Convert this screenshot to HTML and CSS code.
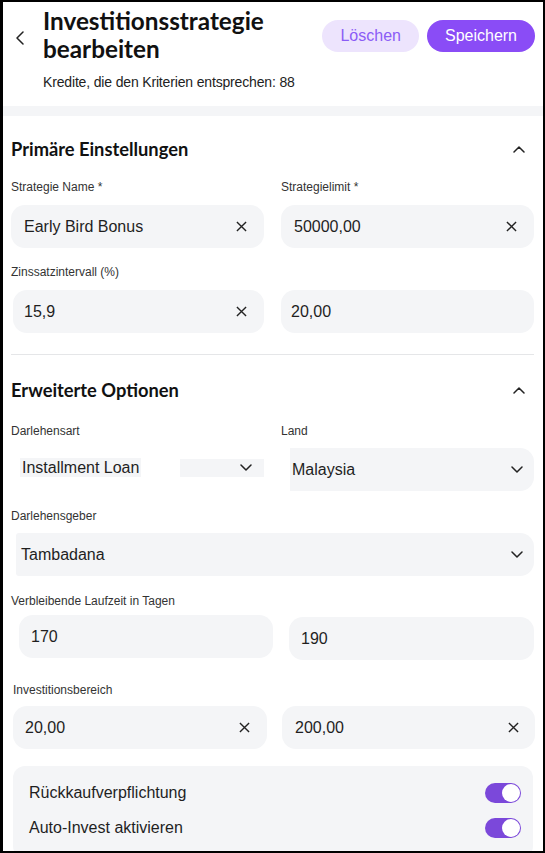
FILE: index.html
```html
<!DOCTYPE html>
<html lang="de">

<head>
    <meta charset="UTF-8">
    <meta name="viewport" content="width=device-width, initial-scale=1.0">
    <title>Investitionsstrategie bearbeiten</title>
    <link rel="stylesheet" href="styles.css">
</head>

<body>
    <div class="screen">
        <!-- Kopfzeile mit Titel und Aktionen -->
        <header class="topbar">
            <button class="back" aria-label="Zurück">
                <svg width="8" height="14" viewBox="0 0 8 14"><path d="M7 1 1 7l6 6" /></svg>
            </button>
            <div class="heading">
                <h1 class="title">Investitionsstrategie<br>bearbeiten</h1>
                <p class="matches">Kredite, die den Kriterien entsprechen: 88</p>
            </div>
            <div class="actions">
                <button class="btn btn-soft">Löschen</button>
                <button class="btn btn-primary">Speichern</button>
            </div>
        </header>
        <div class="band"></div>

        <main class="panel">
            <!-- Primäre Einstellungen -->
            <section class="group">
                <div class="group-head">
                    <h2>Primäre Einstellungen</h2>
                    <svg class="caret-up" width="12" height="7" viewBox="0 0 12 7"><path d="M1 6 6 1l5 5" /></svg>
                </div>
                <div class="pair labels first">
                    <label>Strategie Name *</label>
                    <label>Strategielimit *</label>
                </div>
                <div class="pair inputs near">
                    <div class="input">Early Bird Bonus
                        <svg class="clear" width="11" height="11" viewBox="0 0 12 12"><path d="M1 1l10 10M11 1 1 11" /></svg>
                    </div>
                    <div class="input">50000,00
                        <svg class="clear" width="11" height="11" viewBox="0 0 12 12"><path d="M1 1l10 10M11 1 1 11" /></svg>
                    </div>
                </div>
                <div class="pair labels">
                    <label>Zinssatzintervall (%)</label>
                </div>
                <div class="pair inputs near">
                    <div class="input shift-2">15,9
                        <svg class="clear" width="11" height="11" viewBox="0 0 12 12"><path d="M1 1l10 10M11 1 1 11" /></svg>
                    </div>
                    <div class="input pad-10">20,00</div>
                </div>
            </section>

            <hr class="divider">

            <!-- Erweiterte Optionen -->
            <section class="group">
                <div class="group-head second">
                    <h2>Erweiterte Optionen</h2>
                    <svg class="caret-up" width="12" height="7" viewBox="0 0 12 7"><path d="M1 6 6 1l5 5" /></svg>
                </div>
                <div class="pair labels wide">
                    <label>Darlehensart</label>
                    <label>Land</label>
                </div>
                <div class="pair inputs tight">
                    <div class="select-loose">
                        <span class="value">Installment Loan</span>
                        <span class="caret-box">
                            <svg class="caret-down" width="12" height="7" viewBox="0 0 12 7"><path d="M1 1l5 5 5-5" /></svg>
                        </span>
                    </div>
                    <div class="input select land">Malaysia
                        <svg class="caret-down" width="12" height="7" viewBox="0 0 12 7"><path d="M1 1l5 5 5-5" /></svg>
                    </div>
                </div>
                <label class="single">Darlehensgeber</label>
                <div class="input select lender">Tambadana
                    <svg class="caret-down" width="12" height="7" viewBox="0 0 12 7"><path d="M1 1l5 5 5-5" /></svg>
                </div>
                <label class="single">Verbleibende Laufzeit in Tagen</label>
                <div class="pair inputs days">
                    <div class="input day-min">170</div>
                    <div class="input day-max">190</div>
                </div>
                <label class="single range">Investitionsbereich</label>
                <div class="pair inputs amount">
                    <div class="input amount-min">20,00
                        <svg class="clear" width="11" height="11" viewBox="0 0 12 12"><path d="M1 1l10 10M11 1 1 11" /></svg>
                    </div>
                    <div class="input amount-max">200,00
                        <svg class="clear" width="11" height="11" viewBox="0 0 12 12"><path d="M1 1l10 10M11 1 1 11" /></svg>
                    </div>
                </div>

                <div class="switches">
                    <div class="switch-row">
                        <span>Rückkaufverpflichtung</span>
                        <span class="toggle on"><span class="knob"></span></span>
                    </div>
                    <div class="switch-row">
                        <span>Auto-Invest aktivieren</span>
                        <span class="toggle on"><span class="knob"></span></span>
                    </div>
                </div>
            </section>
        </main>
    </div>
</body>

</html>
```

FILE: styles.css
```css
* {
    padding: 0;
    margin: 0;
    box-sizing: border-box;
}

body {
    background-color: #000;
    font-family: "Liberation Sans", Arial, sans-serif;
    color: #1f1f1f;
}

.screen {
    width: 540px;
    height: 849px;
    margin: 2px 2px 2px 3px;
    background-color: #fff;
    overflow: hidden;
}

/* Kopfzeile */
.topbar {
    display: flex;
    align-items: flex-start;
    height: 104px;
    padding-right: 8px;
}

.back {
    width: 40px;
    padding: 29px 0 0 13px;
    display: flex;
    background: none;
    border: 0;
}

.back path,
.caret-up path,
.caret-down path {
    fill: none;
    stroke: #222;
    stroke-width: 1.5;
    stroke-linecap: round;
    stroke-linejoin: round;
}

.heading {
    flex: 1;
    padding-top: 5px;
}

.title {
    font-family: Lato, sans-serif;
    font-weight: 700;
    font-size: 24.3px;
    line-height: 28px;
    color: #111;
}

.matches {
    margin-top: 10px;
    font-size: 14px;
    line-height: 18px;
    letter-spacing: -0.16px;
    color: #222;
}

.actions {
    display: flex;
    gap: 8px;
    margin-top: 18px;
}

.btn {
    height: 32px;
    padding: 0 18px;
    border: 0;
    border-radius: 16px;
    font-family: "Liberation Sans", Arial, sans-serif;
    font-size: 16px;
}

.btn-soft {
    background-color: #ede4fd;
    color: #8b5cf6;
}

.btn-primary {
    background-color: #8a4cf6;
    color: #fff;
}

.band {
    height: 10px;
    background-color: #f4f5f7;
}

/* Formularbereich */
.panel {
    padding: 21px 9px 0 8px;
}

.group-head {
    display: flex;
    align-items: center;
    justify-content: space-between;
    height: 24px;
}

.group-head.second {
    margin-top: 23px;
}

.group-head h2 {
    font-family: Lato, sans-serif;
    font-weight: 700;
    font-size: 18.3px;
    line-height: 24px;
    color: #111;
}

.caret-up {
    margin-right: 9px;
}

.pair {
    display: grid;
    grid-template-columns: minmax(0, 1fr) minmax(0, 1fr);
    column-gap: 17px;
}

label {
    display: block;
    font-size: 12px;
    line-height: 16px;
    color: #333;
}

.labels {
    margin-top: 16px;
}

.labels.first {
    margin-top: 18px;
}

.labels.wide {
    margin-top: 21px;
}

.inputs.near {
    margin-top: 10px;
}

.inputs.tight {
    margin-top: 9px;
}

.input {
    display: flex;
    align-items: center;
    height: 43px;
    padding: 0 17px 0 13px;
    background-color: #f4f5f7;
    border-radius: 14px;
    font-size: 16px;
    color: #1f1f1f;
}

.clear {
    margin-left: auto;
}

.clear path {
    fill: none;
    stroke: #222;
    stroke-width: 1.5;
}

.caret-down {
    margin-left: auto;
}

.shift-2 {
    margin-left: 2px;
    padding-left: 11px;
}

.pad-10 {
    padding-left: 10px;
}

.divider {
    margin-top: 21px;
    border: 0;
    border-top: 1px solid #e5e6e8;
}

/* Darlehensart: Wert und Pfeil getrennt gezeichnet */
.select-loose {
    display: flex;
    align-items: center;
    height: 43px;
    padding-left: 9px;
    margin-top: -2px;
}

.select-loose .value {
    padding: 0 2px;
    line-height: 19px;
    font-size: 16px;
    background-color: #f4f5f7;
}

.caret-box {
    display: flex;
    align-items: center;
    width: 84px;
    height: 18px;
    margin-left: auto;
    padding-right: 12px;
    background-color: #f4f5f7;
}

.land {
    margin-left: 9px;
    padding: 0 11px 0 2px;
    border-radius: 0 14px 14px 0;
}

.single {
    margin-top: 17px;
}

.single.range {
    margin-top: 22px;
    margin-left: 2px;
}

.lender {
    margin-top: 9px;
    margin-left: 5px;
    padding: 0 11px 0 5px;
    border-radius: 3px 14px 14px 3px;
}

.days {
    margin-top: 6px;
}

.day-min {
    width: 254px;
    margin-left: 8px;
    padding-left: 12px;
}

.day-max {
    margin: 2px 0 0 8px;
    padding-left: 12px;
}

.amount {
    margin-top: 8px;
}

.amount-min {
    width: 254px;
    margin-left: 2px;
    padding-left: 12px;
}

.amount-max {
    margin: 0 -1px 0 1px;
    padding-left: 13px;
    padding-right: 16px;
}

/* Schalter */
.switches {
    display: flex;
    flex-direction: column;
    gap: 15px;
    margin: 17px 1px 0 2px;
    padding: 17px 12px 20px 16px;
    background-color: #f4f5f7;
    border-radius: 12px;
}

.switch-row {
    display: flex;
    align-items: center;
    justify-content: space-between;
    height: 20px;
    font-size: 16px;
}

.toggle {
    position: relative;
    width: 36px;
    height: 20px;
    border-radius: 10px;
    background-color: #d4d4d8;
}

.toggle.on {
    background-color: #7b48da;
}

.knob {
    position: absolute;
    top: 1px;
    left: 1px;
    width: 18px;
    height: 18px;
    border-radius: 50%;
    background-color: #fff;
}

.toggle.on .knob {
    left: 17px;
}
```
